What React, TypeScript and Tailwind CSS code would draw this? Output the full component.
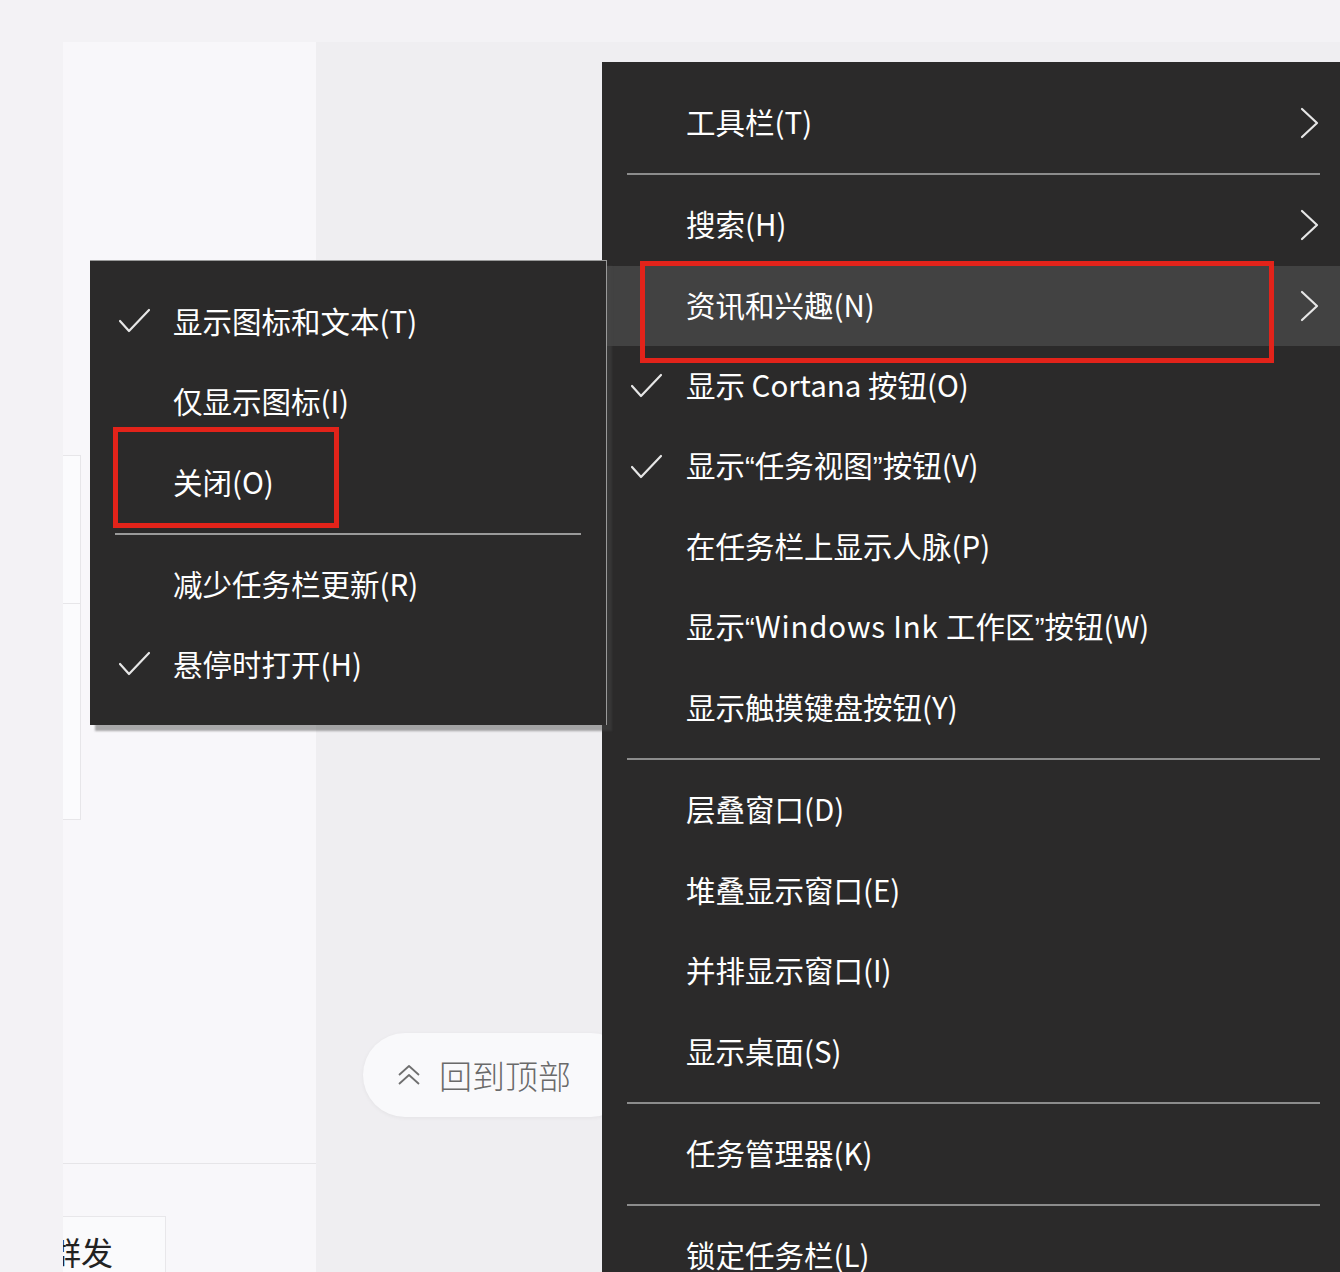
import React from "react";

const Check = () => (
  <svg width="33" height="26" viewBox="0 0 33 26" className="absolute" fill="none">
    <polyline points="2,13 11,23 31,2" stroke="#e6e6e6" strokeWidth="2.2" strokeLinecap="round" strokeLinejoin="round" />
  </svg>
);

const Chevron = () => (
  <svg width="19" height="32" viewBox="0 0 19 32" fill="none">
    <polyline points="2,2 17,16 2,30" stroke="#e6e6e6" strokeWidth="2.2" strokeLinecap="round" strokeLinejoin="round" />
  </svg>
);

const Q = ({ c }: { c: string }) => <span className="font-['Liberation_Sans',sans-serif]">{c}</span>;

type Item =
  | { sep: true }
  | { sep?: false; label: React.ReactNode; check?: boolean; chevron?: boolean; active?: boolean; red?: boolean };

const rightItems: Item[] = [
  { label: "工具栏(T)", chevron: true },
  { sep: true },
  { label: "搜索(H)", chevron: true },
  { label: "资讯和兴趣(N)", chevron: true, active: true, red: true },
  { label: "显示 Cortana 按钮(O)", check: true },
  {
    label: (
      <>
        显示<Q c="“" />任务视图<Q c="”" />按钮(V)
      </>
    ),
    check: true,
  },
  { label: "在任务栏上显示人脉(P)" },
  {
    label: (
      <>
        显示<Q c="“" />
        <span className="tracking-[0.8px]">Windows Ink </span>工作区<Q c="”" />按钮(W)
      </>
    ),
  },
  { label: "显示触摸键盘按钮(Y)" },
  { sep: true },
  { label: "层叠窗口(D)" },
  { label: "堆叠显示窗口(E)" },
  { label: "并排显示窗口(I)" },
  { label: "显示桌面(S)" },
  { sep: true },
  { label: "任务管理器(K)" },
  { sep: true },
  { label: "锁定任务栏(L)" },
];

const leftItems: Item[] = [
  { label: "显示图标和文本(T)", check: true },
  { label: "仅显示图标(I)" },
  { label: "关闭(O)", red: true },
  { sep: true },
  { label: "减少任务栏更新(R)" },
  { label: "悬停时打开(H)", check: true },
];

export default function App() {
  return (
    <div className="relative w-[1340px] h-[1272px] overflow-hidden bg-[#f3f2f5] font-['Noto_Sans_CJK_SC','Noto_Sans',sans-serif]">
      {/* page background */}
      <div className="flex flex-col h-full">
        <div className="h-[42px] shrink-0" />
        <div className="flex flex-1">
          <div className="w-[63px] shrink-0" />
          <div className="w-[253px] shrink-0 bg-[#f8f7fa] flex flex-col overflow-hidden">
            <div className="mt-[413px] w-[18px] h-[365px] bg-[#fbfbfd] border-y border-r border-[#e7e6e9] flex flex-col">
              <div className="mt-[147px] border-t border-[#e7e6e9]" />
            </div>
            <div className="mt-[343px] border-t border-[#e6e5e8]" />
            <div className="mt-[52px] w-[103px] h-[70px] bg-[#fafafc] border-t border-r border-[#e8e7ea] overflow-hidden">
              <div className="-ml-[14px] pt-[18px] text-[32px] leading-none text-[#222] whitespace-nowrap">群发</div>
            </div>
          </div>
          <div className="flex-1 bg-[#efeef1]" />
        </div>
      </div>

      {/* back to top */}
      <div className="absolute left-[363px] top-[1033px] w-[270px] h-[84px] rounded-full bg-[#f9f9fb] shadow-[0_1px_4px_rgba(0,0,0,0.05)] flex items-center pl-[34px] gap-[18px]">
        <svg width="24" height="22" viewBox="0 0 24 22" fill="none">
          <polyline points="2,11 12,2 22,11" stroke="#6f6f6f" strokeWidth="1.8" strokeLinejoin="round" />
          <polyline points="2,20 12,11 22,20" stroke="#6f6f6f" strokeWidth="1.8" strokeLinejoin="round" />
        </svg>
        <span className="text-[33px] leading-none text-[#6a6a6a] font-light">回到顶部</span>
      </div>

      {/* right context menu */}
      <div className="absolute left-[602px] top-[62px] w-[738px] h-[1300px] bg-[#2b2a2a] pt-[21px] text-white text-[29.5px] leading-none">
        {rightItems.map((it, i) =>
          it.sep ? (
            <div key={i} className="h-[21.5px] flex items-center ml-[25px] mr-[20px]">
              <div className="h-[2px] w-full bg-[#8c8c8c]" />
            </div>
          ) : (
            <div
              key={i}
              className={`relative h-[80.5px] flex items-center pl-[84px] whitespace-nowrap ${it.active ? "bg-[#424242]" : ""}`}
            >
              {it.check && (
                <span className="absolute left-[28px] top-[27px] w-[33px] h-[26px]">
                  <Check />
                </span>
              )}
              <span className="-mt-[3px]">{it.label}</span>
              {it.chevron && (
                <span className="absolute right-[21px] top-[24px]">
                  <Chevron />
                </span>
              )}
              {it.red && (
                <div className="absolute left-[38px] -top-[5px] w-[634px] h-[102px] border-[5px] border-[#e2231a]" />
              )}
            </div>
          )
        )}
      </div>

      {/* left context menu */}
      <div className="absolute left-[90px] top-[260px] w-[517px] h-[465px] bg-[#2b2a2a] border-t border-r border-[#9a9a9a] shadow-[5px_6px_2px_rgba(70,70,70,0.45)] pt-[20.5px] text-white text-[29.5px] leading-none">
        {leftItems.map((it, i) =>
          it.sep ? (
            <div key={i} className="h-[21.5px] flex items-center ml-[25px] mr-[25px]">
              <div className="h-[2px] w-full bg-[#9a9a9a]" />
            </div>
          ) : (
            <div key={i} className="relative h-[80.5px] flex items-center pl-[83px] whitespace-nowrap">
              {it.check && (
                <span className="absolute left-[28px] top-[26px] w-[33px] h-[26px]">
                  <Check />
                </span>
              )}
              <span className="-mt-[3px]">{it.label}</span>
              {it.red && (
                <div className="absolute left-[23px] -top-[15.5px] w-[226px] h-[101px] border-[5px] border-[#e2231a]" />
              )}
            </div>
          )
        )}
      </div>
    </div>
  );
}
